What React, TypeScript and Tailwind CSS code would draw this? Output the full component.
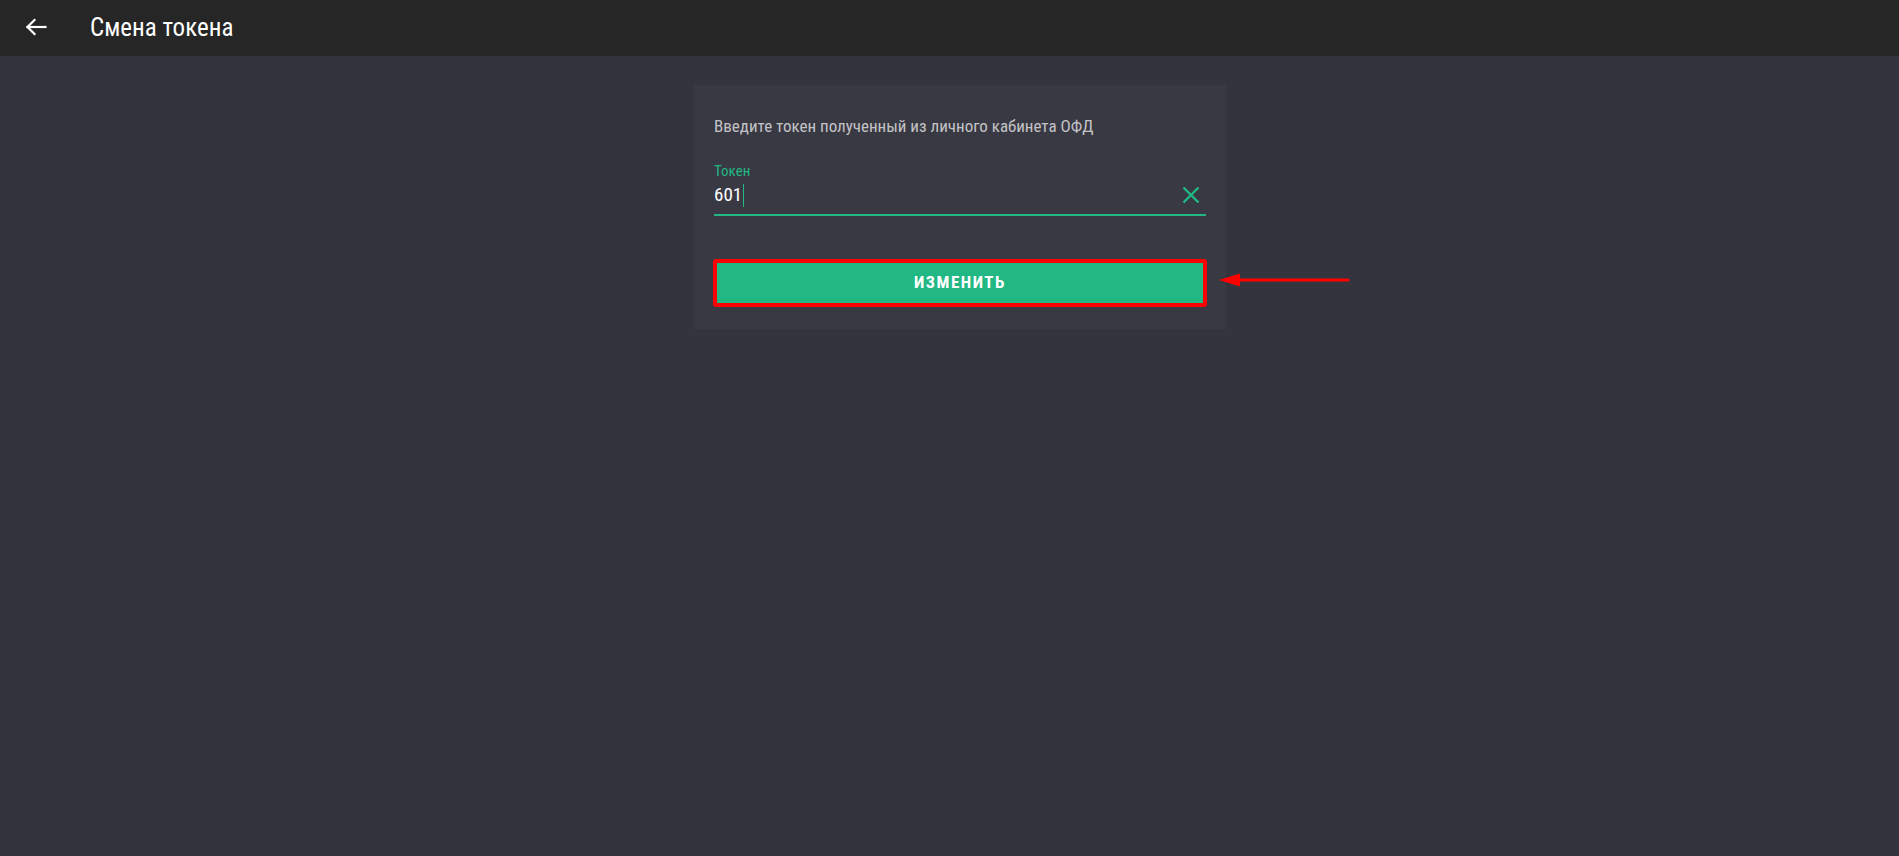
import { useState } from 'react';

const font = { fontFamily: '"Roboto Condensed", "Liberation Sans Narrow", Roboto, sans-serif' };

function BackArrow() {
  return (
    <svg width="22" height="18" viewBox="0 0 22 18" fill="none" stroke="#fff" strokeWidth="2.2" strokeLinecap="square">
      <path d="M2.5 9H20.5" />
      <path d="M9.5 2L2.5 9L9.5 16" />
    </svg>
  );
}

function ClearIcon() {
  return (
    <svg width="18" height="18" viewBox="0 0 18 18" fill="none" stroke="#21b883" strokeWidth="2.4">
      <path d="M1.5 1.5L16.5 16.5M16.5 1.5L1.5 16.5" />
    </svg>
  );
}

export default function App() {
  const [token, setToken] = useState('601');

  return (
    <div className="min-h-screen w-full flex flex-col bg-[#34343e]" style={font}>
      <header className="h-14 shrink-0 flex items-center bg-[#262626] pl-[25px]">
        <button className="flex items-center pb-[3px]">
          <BackArrow />
        </button>
        <h1 className="ml-[43px] text-[25px] leading-none text-white pb-[2px]">Смена токена</h1>
      </header>

      <main className="flex justify-center pl-[21px] pt-[29px]">
        <div className="w-[532px] bg-[#393943] px-5 pt-[29px] pb-[22px]">
          <p className="text-[17px] leading-6 text-[#c3c3c6]">Введите токен полученный из личного кабинета ОФД</p>

          <div className="mt-[25px]">
            <label className="block text-[15px] leading-4 text-[#21b883]">Токен</label>
            <div className="flex items-center h-6 mt-[4px]">
              <div className="flex-1 flex items-center">
                <span className="text-[19px] leading-6 text-white">{token}</span>
                <span className="ml-[1px] w-px h-[23px] bg-[#21b883]" />
              </div>
              <button className="mr-[6px]" onClick={() => setToken('')}>
                <ClearIcon />
              </button>
            </div>
            <div className="mt-[7px] h-[2px] bg-[#21b883]" />
          </div>

          <div className="relative mt-[43px]">
            <button className="w-[494px] -ml-px h-12 rounded-[3px] border-4 border-[#ff0000] bg-[#21b883] text-white text-[17px] font-bold tracking-[1.5px]">
              ИЗМЕНИТЬ
            </button>
            <svg className="absolute left-[505px] top-[14px]" width="132" height="16" viewBox="0 0 132 16">
              <path d="M0 7L21 0.5V13.5Z" fill="#ff0000" />
              <path d="M18 7H129" stroke="#ff0000" strokeWidth="3" strokeLinecap="round" />
            </svg>
          </div>
        </div>
      </main>
    </div>
  );
}
